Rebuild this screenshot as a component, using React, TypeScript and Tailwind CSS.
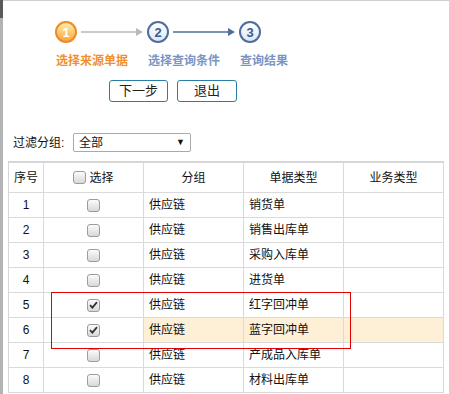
import { Fragment } from "react";

const rows = [
    { no: 1, group: "供应链", bill: "销货单", checked: false },
    { no: 2, group: "供应链", bill: "销售出库单", checked: false },
    { no: 3, group: "供应链", bill: "采购入库单", checked: false },
    { no: 4, group: "供应链", bill: "进货单", checked: false },
    { no: 5, group: "供应链", bill: "红字回冲单", checked: true },
    { no: 6, group: "供应链", bill: "蓝字回冲单", checked: true, active: true },
    { no: 7, group: "供应链", bill: "产成品入库单", checked: false },
    { no: 8, group: "供应链", bill: "材料出库单", checked: false },
];

function Checkbox({ checked }: { checked?: boolean }) {
    return (
        <span className="inline-flex items-center justify-center w-[13px] h-[13px] rounded-[3px] border border-[#9c9c9c] bg-gradient-to-b from-[#fbfbfb] to-[#d8d8d8]">
            {checked && (
                <svg width="9" height="8" viewBox="0 0 9 8">
                    <path d="M1 4.2 L3.4 6.6 L8 1.2" fill="none" stroke="#333" strokeWidth={1.8} />
                </svg>
            )}
        </span>
    );
}

function StepCircle({ n, active }: { n: number; active?: boolean }) {
    return active ? (
        <div className="w-[22px] h-[22px] rounded-full border-2 border-[#ec8c22] bg-gradient-to-b from-[#fff0a8] to-[#f7a53a] flex items-center justify-center text-[13px] font-bold text-white leading-none">
            {n}
        </div>
    ) : (
        <div className="w-[22px] h-[22px] rounded-full border-2 border-[#4d6d9c] bg-gradient-to-b from-white to-[#dde8f6] flex items-center justify-center text-[13px] font-bold text-[#3c5b8c] leading-none">
            {n}
        </div>
    );
}

function Arrow({ color }: { color: string }) {
    return (
        <svg width="62" height="10" viewBox="0 0 62 10" className="mx-[4px]">
            <line x1="0" y1="5" x2="56" y2="5" stroke={color} strokeWidth={1.5} />
            <path d="M55 1 L62 5 L55 9 Z" fill={color} />
        </svg>
    );
}

export default function App() {
    const cell = "border-r border-b border-[#dadada] flex items-center text-[12px] text-[#111]";

    return (
        <div
            className="relative w-[449px] h-[394px] overflow-hidden bg-white flex"
            style={{ fontFamily: '"Liberation Sans", "Noto Sans CJK SC", sans-serif' }}
        >
            {/* left frame bar */}
            <div className="w-[3px] flex flex-col shrink-0">
                <div className="h-[18px] bg-[#5a5a5a]" />
                <div className="flex-1 bg-[#b3b3b3]" />
            </div>

            <div className="flex-1 flex flex-col">
                <div className="h-[1px] bg-[#cfcfcf]" />

                {/* stepper */}
                <div className="mt-[20px] ml-[52px] flex items-center">
                    <StepCircle n={1} active />
                    <Arrow color="#b9b9b9" />
                    <StepCircle n={2} />
                    <Arrow color="#4d6d9c" />
                    <StepCircle n={3} />
                </div>
                <div className="mt-[11px] ml-[53px] flex text-[12px] font-bold leading-[14px]">
                    <div className="w-[92px] text-[#f0902c]">选择来源单据</div>
                    <div className="w-[92px] text-[#7a95c3]">选择查询条件</div>
                    <div className="w-[92px] text-[#7a95c3]">查询结果</div>
                </div>

                {/* buttons */}
                <div className="mt-[12px] ml-[106px] flex gap-[9px]">
                    <button className="w-[59px] h-[22px] border border-[#2a7ea6] rounded-[3px] text-[13px] text-[#222] bg-white">下一步</button>
                    <button className="w-[60px] h-[22px] border border-[#2a7ea6] rounded-[3px] text-[13px] text-[#222] bg-white">退出</button>
                </div>

                {/* filter */}
                <div className="mt-[31px] ml-[10px] flex items-center text-[12px] text-[#111]">
                    <span className="w-[60px]">过滤分组:</span>
                    <div className="w-[118px] h-[19px] border border-[#a9a9a9] rounded-[2px] flex items-center justify-between px-[5px]">
                        <span>全部</span>
                        <span className="text-[9px]">▼</span>
                    </div>
                </div>

                {/* table */}
                <div className="mt-[9px] ml-[5px] w-[436px] grid grid-cols-[35px_100px_100px_100px_100px] border-t-2 border-l border-[#d6d6d6]">
                    <div className={`${cell} h-[30px] justify-center`}>序号</div>
                    <div className={`${cell} h-[30px] justify-center gap-[3px]`}>
                        <Checkbox />
                        <span>选择</span>
                    </div>
                    <div className={`${cell} h-[30px] justify-center`}>分组</div>
                    <div className={`${cell} h-[30px] justify-center`}>单据类型</div>
                    <div className={`${cell} h-[30px] justify-center`}>业务类型</div>

                    {rows.map((r) => (
                        <Fragment key={r.no}>
                            <div className={`${cell} h-[25px] justify-center text-[#1c2a4a]`}>{r.no}</div>
                            <div className={`${cell} h-[25px] justify-center`}>
                                <Checkbox checked={r.checked} />
                            </div>
                            <div className={`${cell} h-[25px] pl-[5px] ${r.active ? "bg-[#feefd7]" : ""}`}>{r.group}</div>
                            <div className={`${cell} h-[25px] pl-[5px] ${r.active ? "bg-[#feefd7]" : ""}`}>{r.bill}</div>
                            <div className={`${cell} h-[25px] ${r.active ? "bg-[#feefd7]" : ""}`} />
                        </Fragment>
                    ))}
                </div>
            </div>

            {/* red annotation box */}
            <div className="absolute left-[51px] top-[292px] w-[300px] h-[57px] border border-[#e30000] pointer-events-none" />
        </div>
    );
}
